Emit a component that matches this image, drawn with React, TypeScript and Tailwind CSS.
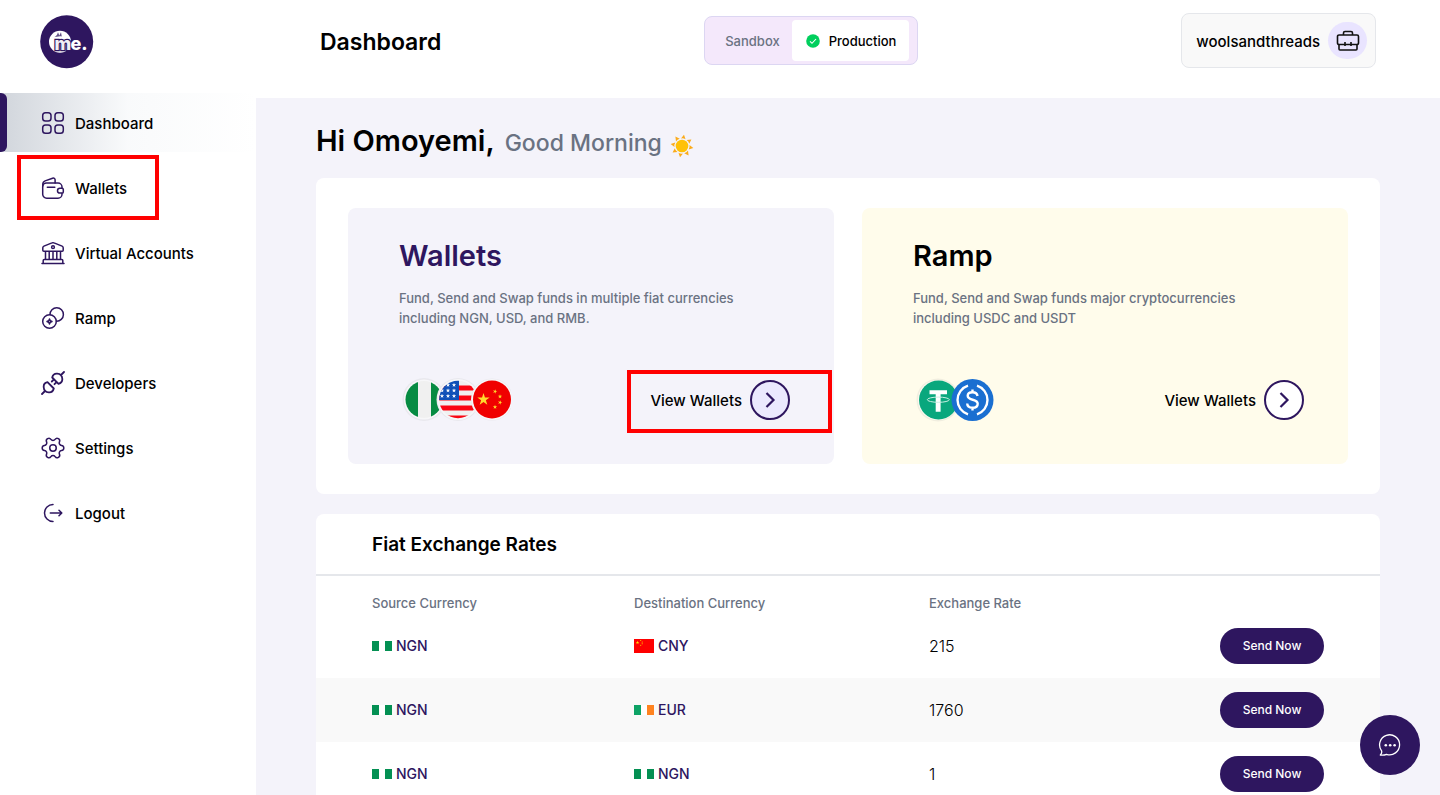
import type { ReactNode } from "react"
import { Settings } from "lucide-react"

function NavIcon({ children }: { children: ReactNode }) {
  return (
    <svg viewBox="0 0 24 24" className="size-6" fill="none" stroke="#2e165f" strokeWidth="1.5" strokeLinecap="round" strokeLinejoin="round" aria-hidden="true">
      {children}
    </svg>
  )
}

const navItems = [
  {
    label: "Dashboard",
    active: true,
    icon: (
      <NavIcon>
        <rect x="1.7" y="1.7" width="8.3" height="8.3" rx="2.8" />
        <rect x="14" y="1.7" width="8.3" height="8.3" rx="2.8" />
        <rect x="1.7" y="14" width="8.3" height="8.3" rx="2.8" />
        <rect x="14" y="14" width="8.3" height="8.3" rx="2.8" />
      </NavIcon>
    ),
  },
  {
    label: "Wallets",
    marked: true,
    icon: (
      <NavIcon>
        <path d="M21 12V11a4 4 0 0 0-4-4H5.500a3.800 3.800 0 0 0-3.800 3.800v7.400a4 4 0 0 0 4 4H17a4 4 0 0 0 4-4v-.700" />
        <path d="M1.800 10V8.200c0-1.500.900-2.800 2.300-3.300l7.500-2.700c1.300-.500 2.500.300 2.500 1.600V7" />
        <path d="M22.300 13.500v2.400c0 .700-.500 1.200-1.200 1.200h-2.200c-1.400 0-2.400-1-2.400-2.400s1-2.400 2.400-2.400h2.200c.700 0 1.200.500 1.200 1.200z" />
        <path d="M6.300 11.200h7.500" />
      </NavIcon>
    ),
  },
  {
    label: "Virtual Accounts",
    icon: (
      <NavIcon>
        <path d="M1.800 9.200V6.800c0-.800.400-1.400 1.100-1.700L11 1.900c.600-.300 1.400-.300 2 0l8.100 3.200c.700.300 1.100.900 1.100 1.700v2.400c0 .600-.400 1-1 1H2.800c-.600 0-1-.400-1-1zM1 22.500h22M2.200 22.300v-2.800c0-.600.400-1 1-1h17.600c.600 0 1 .400 1 1v2.800M4.500 18.300v-8M8.200 18.300v-8M12 18.300v-8M15.800 18.300v-8M19.500 18.300v-8" />
        <circle cx="12" cy="6.200" r="1.400" />
      </NavIcon>
    ),
  },
  {
    label: "Ramp",
    icon: (
      <NavIcon>
        <circle cx="8.500" cy="15.500" r="6.800" />
        <path d="M9 8.600a6.700 6.700 0 1 1 6.400 6.600" />
        <path d="m8.500 13 .800 1.700 1.700.800-1.700.800-.800 1.700-.800-1.700-1.700-.800 1.700-.800z" />
      </NavIcon>
    ),
  },
  {
    label: "Developers",
    icon: (
      <NavIcon>
        <g strokeWidth="1.8">
          <path d="M12.800 17.500c-.700 2.800-2.700 4-5 3.800-3-.200-4.900-2.100-5.100-5.100-.200-2.300 1-4.300 3.800-5zM1 23l3-3" />
          <path d="M11.200 6.500c.700-2.800 2.700-4 5-3.800 3 .200 4.900 2.100 5.100 5.100.200 2.300-1 4.300-3.800 5zM23 1l-3 3M13 8.300l-2.200 2.200M15.700 11l-2.200 2.200" />
        </g>
      </NavIcon>
    ),
  },
  { label: "Settings", icon: <Settings className="-m-px size-[26px] rotate-90" color="#2e165f" strokeWidth={1.4} /> },
  {
    label: "Logout",
    icon: (
      <NavIcon>
        <path d="M12 3.500a8.500 8.500 0 0 0 0 17M9.300 12h11.500M18 9.200l2.800 2.800-2.800 2.800" />
      </NavIcon>
    ),
  },
]

const rates = [
  { from: "NGN", to: "CNY", rate: "215" },
  { from: "NGN", to: "EUR", rate: "1760" },
  { from: "NGN", to: "NGN", rate: "1" },
]

const star = "M0-1 .225-.309.951-.309.363.118.588.809 0 .382-.588.809-.363.118-.951-.309-.225-.309Z"

function Logo() {
  return (
    <svg viewBox="0 0 54 54" className="size-[54px]" role="img" aria-label="me.">
      <circle cx="26.700" cy="26.700" r="26.500" fill="#2e165f" />
      <circle cx="20" cy="26.700" r="11" fill="#fff" />
      <g fontFamily="Inter, sans-serif" fontWeight="800" fontSize="18">
        <text x="14.500" y="35" fill="#f1eff5" stroke="#2e165f" strokeWidth="2.400" paintOrder="stroke">m</text>
        <text x="30.500" y="35" fill="#fff">e.</text>
      </g>
      <path d="M12.500 22.300c2.500.300 4.500-1.500 5.500-5l1.300 3.200 1.700-3.200.800 4.200c-3.200-.700-5.800 1-9.300.800z" fill="#2e165f" opacity=".75" />
    </svg>
  )
}

function Sun() {
  return (
    <svg viewBox="-12 -12 24 24" className="size-6" role="img" aria-label="Sun">
      {[10, 55, 100, 145, 190, 235, 280, 325].map((angle) => (
        <path key={angle} d="M0-11.500 2.300-7.200Q0-8.200-2.300-7.200Z" fill="#fbab1a" transform={`rotate(${angle})`} />
      ))}
      <circle r="6.300" fill="#ffc107" />
    </svg>
  )
}

function SmallFlag({ code }: { code: string }) {
  if (code === "CNY") {
    return (
      <svg viewBox="0 0 20 14" className="h-3.5 w-5" aria-hidden="true">
        <rect width="20" height="14" fill="#fe0000" />
        <g fill="#ffde00">
          <path d={star} transform="translate(3.500 3.600) scale(1.900)" />
          <circle cx="6.700" cy="1.500" r=".55" />
          <circle cx="8.200" cy="3" r=".55" />
          <circle cx="8.200" cy="4.800" r=".55" />
          <circle cx="6.700" cy="6.300" r=".55" />
        </g>
      </svg>
    )
  }
  return (
    <svg viewBox="0 0 20 10" className="h-2.5 w-5" aria-hidden="true">
      <rect width="20" height="10" fill="#fff" />
      <rect width="7" height="10" fill={code === "EUR" ? "#0da366" : "#049053"} />
      <rect x="13" width="7" height="10" fill={code === "EUR" ? "#ff8320" : "#049053"} />
    </svg>
  )
}

function FiatCoins() {
  return (
    <svg viewBox="0 0 112 44" className="h-11 w-28" aria-hidden="true">
      <defs>
        <clipPath id="ng"><circle cx="25" cy="21.500" r="18.500" /></clipPath>
        <clipPath id="us"><circle cx="59" cy="21.500" r="18.800" /></clipPath>
      </defs>
      <circle cx="25" cy="21.500" r="21.500" fill="#e9e8ee" />
      <circle cx="25" cy="21.500" r="20" fill="#f7f7f9" />
      <g clipPath="url(#ng)">
        <rect x="5" width="40" height="44" fill="#f0f0f0" />
        <rect x="5" width="14" height="44" fill="#068b42" />
        <rect x="32" width="14" height="44" fill="#068b42" />
      </g>
      <circle cx="59" cy="21.500" r="21.500" fill="#e9e8ee" />
      <circle cx="59" cy="21.500" r="20.500" fill="#f7f7f9" />
      <g clipPath="url(#us)">
        <rect x="39" width="40" height="44" fill="#f0f0f0" />
        <path d="M39 7.500h40v5H39zM39 17.500h40v5H39zM39 27.500h40v5H39zM39 37.500h40v5H39z" fill="#fa0613" />
        <rect x="39" width="21" height="22" fill="#1050b8" />
        <g fill="#fff">
          {[[49, 7], [55, 7], [43, 12.5], [49, 12.5], [55, 12.5], [43, 18], [49, 18], [55, 18]].map(([x, y]) => (
            <path key={`${x}-${y}`} d={star} transform={`translate(${x} ${y}) scale(2.300)`} />
          ))}
        </g>
      </g>
      <circle cx="93" cy="21.500" r="21" fill="#e9e8ee" />
      <circle cx="93" cy="21.500" r="20.500" fill="#f7f7f9" />
      <circle cx="93" cy="21.500" r="19" fill="#f00000" />
      <g fill="#ffda2c">
        <path d={star} transform="translate(84.500 21.500) scale(6.500)" />
        <path d={star} transform="translate(96 13.500) rotate(20) scale(2.300)" />
        <path d={star} transform="translate(101 18.500) scale(2.300)" />
        <path d={star} transform="translate(101 24.500) rotate(20) scale(2.300)" />
        <path d={star} transform="translate(96 29) scale(2.300)" />
      </g>
    </svg>
  )
}

function CryptoCoins() {
  return (
    <svg viewBox="0 0 112 44" className="h-11 w-28" aria-hidden="true">
      <circle cx="25" cy="22" r="21.500" fill="#f1eedf" />
      <circle cx="25" cy="22" r="20" fill="#fcfbf2" />
      <circle cx="25.500" cy="22" r="19.500" fill="#09a77d" />
      <path d="M16.500 12.200h17.500v4h-6.400v17.500h-4.900V16.200h-6.200z" fill="#fff" />
      <ellipse cx="25.300" cy="21.700" rx="11" ry="2.600" fill="none" stroke="#c9f0e4" strokeWidth="1" />
      <circle cx="59.500" cy="22" r="21" fill="#1a6fd1" />
      <g fill="none" stroke="#fff" strokeWidth="2.400">
        <path d="M55 7.700a15 15 0 0 0 0 28.600M64 7.700a15 15 0 0 1 0 28.600" />
        <path d="M64.500 18c-.300-2.600-2-3.800-5-3.800s-4.800 1.400-4.800 3.600c0 5.300 10 2.600 10 8 0 2.600-2.200 4-5.200 4-3.300 0-5.200-1.500-5.300-4.300M59.500 11.500v3M59.500 29.500v3" />
      </g>
    </svg>
  )
}

type FundCardProps = {
  title: string
  text: ReactNode
  coins: ReactNode
  className: string
  titleClass: string
  circleClass: string
  marked?: boolean
}

function FundCard({ title, text, coins, className, titleClass, circleClass, marked }: FundCardProps) {
  return (
    <section className={`relative flex min-h-64 flex-1 flex-col rounded-lg pl-[51px] pr-11 pt-7 ${className}`}>
      <h2 className={`text-[29px] leading-10 font-semibold ${titleClass}`}>{title}</h2>
      <p className="mt-3 text-[13px] leading-5 font-medium text-gray-500">{text}</p>
      <div className="mt-[50px] flex items-center justify-between">
        {coins}
        <a href="#wallets" className="flex items-center gap-2 text-[15px] font-medium text-black">
          <span className="pt-0.5">View Wallets</span>
          <span className={`flex size-10 items-center justify-center rounded-full border-2 border-[#2e165f] ${circleClass}`}>
            <svg viewBox="0 0 24 24" className="size-6" fill="none" stroke="#2e165f" strokeWidth="2.200" aria-hidden="true">
              <path d="m8.500 5 7 7-7 7" />
            </svg>
          </span>
        </a>
      </div>
      {marked && <div className="pointer-events-none absolute right-0.5 bottom-[31px] h-[63px] w-[205px] border-4 border-[#ff0000]" />}
    </section>
  )
}

export default function App() {
  return (
    <div className="flex h-screen overflow-hidden bg-white font-['Inter',sans-serif] text-black">
      <aside className="w-64 shrink-0">
        <div className="flex h-[93px] items-start pt-[15px] pl-10">
          <Logo />
        </div>
        <nav className="flex flex-col gap-1.5">
          {navItems.map((item) => (
            <a
              key={item.label}
              href="#"
              className={`relative flex h-[59px] items-center gap-2.5 pl-[41px] text-[15px] font-medium ${
                item.active ? "bg-linear-to-r from-gray-300 via-gray-50 via-50% to-white" : ""
              }`}
            >
              {item.active && <span className="absolute inset-y-0 left-0 w-[7px] rounded-r-md bg-[#2e165f]" />}
              {item.icon}
              <span className="pt-[3px]">{item.label}</span>
              {item.marked && <span className="pointer-events-none absolute top-[-3px] left-[17px] h-[65px] w-[142px] border-4 border-[#ff0000]" />}
            </a>
          ))}
        </nav>
      </aside>

      <div className="flex min-w-0 flex-1 flex-col">
        <header className="flex h-[98px] shrink-0 items-start justify-between px-16 pt-[13px]">
          <h1 className="flex h-14 items-center pt-0.5 text-[23px] font-semibold">Dashboard</h1>
          <div className="mt-[3px] flex h-[49px] items-center rounded-lg border border-[#dcd6f2] bg-[#f4e8fb] pr-2 pl-2 text-[13px] font-medium">
            <button className="px-3 pt-0.5 text-gray-500">Sandbox</button>
            <button className="flex h-[41px] items-center gap-2 rounded bg-white px-[13px]">
              <svg viewBox="0 0 16 16" className="size-4" aria-hidden="true">
                <circle cx="8" cy="8" r="6.800" fill="#00cf5d" />
                <path d="m5 8.300 2 2 4-4.300" fill="none" stroke="#fff" strokeWidth="1.100" />
              </svg>
              <span className="pt-0.5">Production</span>
            </button>
          </div>
          <button className="flex h-[55px] items-center gap-2 rounded-lg border border-gray-200 bg-[#f9f9f9] pr-2 pl-3.5 text-[15px] font-medium">
            <span className="pt-[3px]">woolsandthreads</span>
            <span className="flex h-[37px] w-[39px] items-center justify-center rounded-full bg-[#e9e4ff]">
              <svg viewBox="0 0 24 24" className="size-6" fill="none" stroke="#111" strokeWidth="1.600" strokeLinejoin="round" aria-hidden="true">
                <path d="M3 6h18a1.500 1.500 0 0 1 1.500 1.500v6.500a1.500 1.500 0 0 1-1.500 1.500H3A1.500 1.500 0 0 1 1.500 14V7.500A1.500 1.500 0 0 1 3 6zM7.500 6V4A1.500 1.500 0 0 1 9 2.500h6A1.500 1.500 0 0 1 16.500 4v2M3 15.500V20a1 1 0 0 0 1 1h16a1 1 0 0 0 1-1v-4.500M9 13v4M15 13v4" />
              </svg>
            </span>
          </button>
        </header>

        <main className="flex-1 overflow-y-auto bg-[#f4f3fa] px-[60px] pt-5 [scrollbar-width:none]">
          <div className="flex h-[60px] items-start gap-2">
            <p className="flex items-baseline gap-2.5 pt-px text-[29px] leading-[44px] font-semibold">
              Hi Omoyemi, <span className="text-[23px] font-medium text-gray-500">Good Morning</span>
            </p>
            <span className="mt-4"><Sun /></span>
          </div>

          <div className="flex gap-7 rounded-lg bg-white px-8 py-[30px]">
            <FundCard
              title="Wallets"
              text={<>Fund, Send and Swap funds in multiple fiat currencies<br />including NGN, USD, and RMB.</>}
              coins={<FiatCoins />}
              className="bg-[#f4f3fa]"
              titleClass="text-[#2e165f]"
              circleClass="bg-[#ebe9fe]"
              marked
            />
            <FundCard
              title="Ramp"
              text={<>Fund, Send and Swap funds major cryptocurrencies<br />including USDC and USDT</>}
              coins={<CryptoCoins />}
              className="bg-[#fffceb]"
              titleClass="text-black"
              circleClass="bg-white"
            />
          </div>

          <section className="mt-5 overflow-hidden rounded-lg bg-white">
            <h2 className="border-b-2 border-gray-200 pt-[17px] pb-[15px] pl-14 text-[19px] leading-7 font-semibold">Fiat Exchange Rates</h2>
            <table className="w-full table-fixed text-left">
              <thead>
                <tr className="h-[38px] text-[13px] text-gray-500">
                  <th className="w-[318px] pt-4 pl-14 leading-5 font-medium">Source Currency</th>
                  <th className="w-[295px] pt-4 leading-5 font-medium">Destination Currency</th>
                  <th className="pt-4 leading-5 font-medium">Exchange Rate</th>
                  <th className="w-40" aria-label="Action" />
                </tr>
              </thead>
              <tbody>
                {rates.map((row) => (
                  <tr key={row.to} className="h-16 even:bg-[#f9f9f9]">
                    <td className="pl-14">
                      <span className="flex items-center gap-1 text-sm font-medium text-[#2e165f]"><SmallFlag code={row.from} />{row.from}</span>
                    </td>
                    <td>
                      <span className="flex items-center gap-1 text-sm font-medium text-[#2e165f]"><SmallFlag code={row.to} />{row.to}</span>
                    </td>
                    <td className="text-base font-light">{row.rate}</td>
                    <td>
                      <button className="flex h-9 w-[104px] items-center justify-center rounded-full bg-[#2e165f] text-xs font-medium text-white">Send Now</button>
                    </td>
                  </tr>
                ))}
              </tbody>
            </table>
          </section>
        </main>
      </div>

      <button aria-label="Open chat" className="fixed right-5 bottom-5 flex size-[60px] items-center justify-center rounded-full bg-[#2e165f]">
        <svg viewBox="0 0 24 24" className="size-6" fill="none" stroke="#fff" strokeWidth="1.300" strokeLinejoin="round" aria-hidden="true">
          <path d="M2.300 22c1.400-1.300 1.700-2.700 1.300-4.200A10 10 0 1 1 8.500 21.300c-1.800.800-3.800 1-6.200.700z" />
          <g fill="#fff" stroke="none">
            <circle cx="7.800" cy="12.300" r="1.300" />
            <circle cx="12.200" cy="12.300" r="1.300" />
            <circle cx="16.600" cy="12.300" r="1.300" />
          </g>
        </svg>
      </button>
    </div>
  )
}
